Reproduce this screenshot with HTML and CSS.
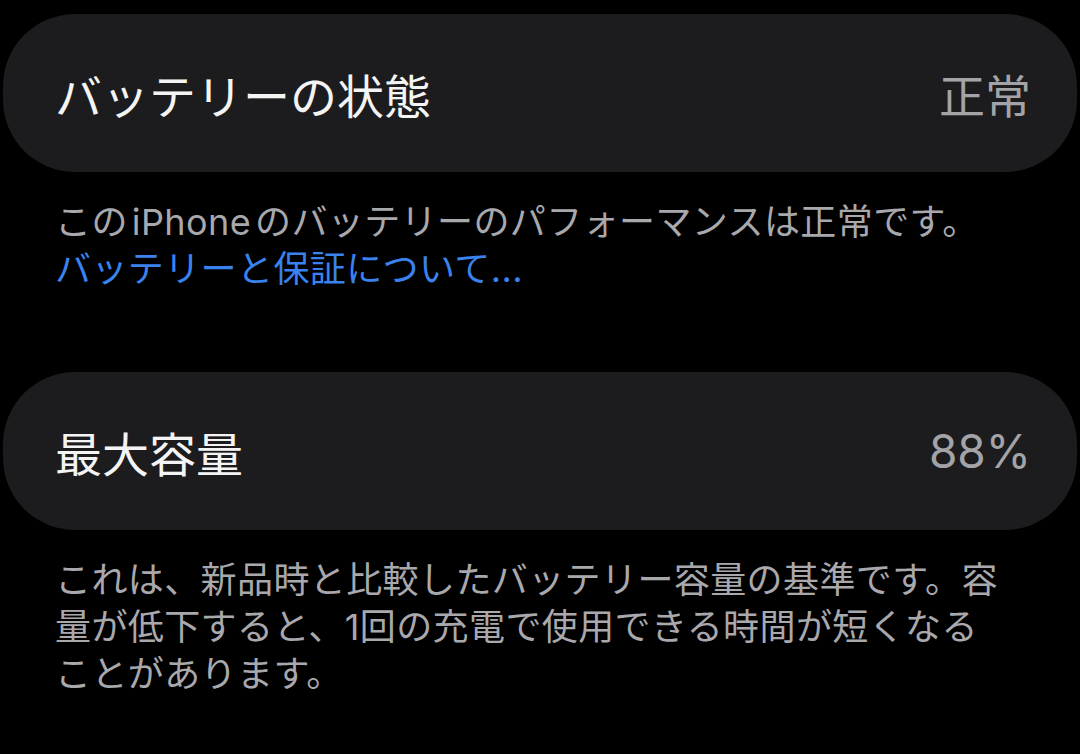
FILE: index.html
```html
<!DOCTYPE html>
<html lang="ja">
<head>
    <meta charset="UTF-8">
    <title>バッテリーの状態</title>
    <link rel="stylesheet" href="styles.css">
</head>
<body>
    <div class="settings">
        <section class="group">
            <div class="cell">
                <span class="cell-title">バッテリーの状態</span>
                <span class="cell-value">正常</span>
            </div>
            <p class="footer">
                この<span class="latin">iPhone</span>のバッテリーのパフォーマンスは正常です。<br>
                <a href="#">バッテリーと保証について...</a>
            </p>
        </section>

        <section class="group">
            <div class="cell">
                <span class="cell-title">最大容量</span>
                <span class="cell-value">88%</span>
            </div>
            <p class="footer">
                これは、新品時と比較したバッテリー容量の基準です。容<br>
                量が低下すると、1回の充電で使用できる時間が短くなる<br>
                ことがあります。
            </p>
        </section>
    </div>
</body>
</html>
```

FILE: styles.css
```css
body {
    margin: 0;
    background-color: #000;
    font-family: Inter, "Noto Sans CJK JP", sans-serif;
}

.settings {
    padding: 14px 3px 0;
}

.group + .group {
    margin-top: 79px;
}

.cell {
    display: flex;
    align-items: center;
    justify-content: space-between;
    box-sizing: border-box;
    height: 158px;
    padding: 0 46px 0 52px;
    background: #1c1c1e;
    border-radius: 72px;
}

.cell-title {
    font-size: 47px;
    color: #f4f4f4;
}

.cell-value {
    font-size: 46px;
    color: #a3a3a8;
}

.footer {
    margin: 27px 0 0;
    padding: 0 52px;
    font-size: 36px;
    line-height: 47px;
    letter-spacing: 0.4px;
    color: #a8a8ad;
    white-space: nowrap;
}

/* latin words get a little air inside Japanese text */
.footer .latin {
    margin: 0 4px;
}

.footer a {
    color: #3a82ee;
    text-decoration: none;
}
```
